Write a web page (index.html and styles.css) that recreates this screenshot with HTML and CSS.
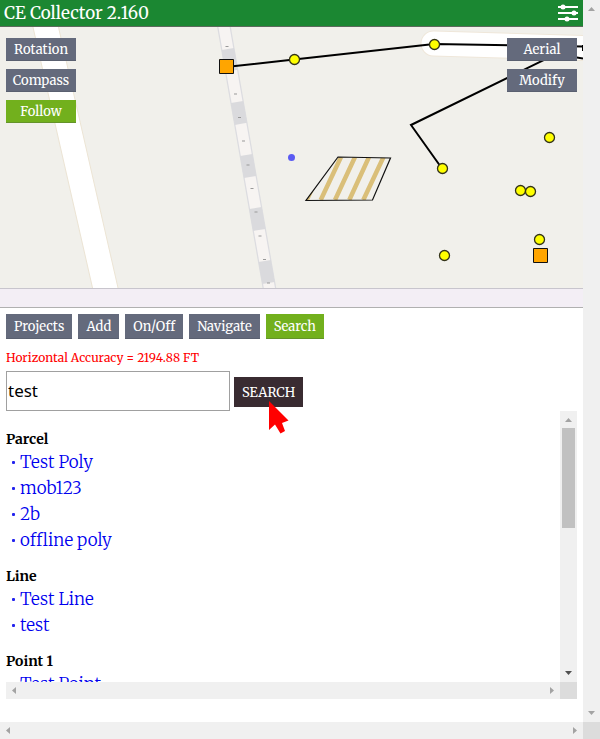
FILE: index.html
```html
<!DOCTYPE html>
<html lang="en">
<head>
<meta charset="utf-8">
<meta name="viewport" content="width=device-width, initial-scale=1">
<title>CE Collector 2.160</title>
<link rel="stylesheet" href="styles.css">
</head>
<body>
<div class="viewport">
  <div class="app">
    <header class="topbar">
      <h1>CE Collector 2.160</h1>
      <button class="menu" type="button" aria-label="Settings">
        <svg width="20" height="18" viewBox="0 0 20 18" fill="#fff">
          <path d="M0 2h20v2H0zM0 8h20v2H0zM0 14h20v2H0z"/>
          <circle cx="5" cy="3" r="2.5"/><circle cx="16" cy="9" r="2.5"/><circle cx="9" cy="15" r="2.5"/>
        </svg>
      </button>
    </header>

    <section class="map" aria-label="Map">
      <svg class="map-canvas" viewBox="0 27 583 261">
        <defs>
          <clipPath id="parcel"><path d="M338 157 390.500 158 372.500 200 306 200.500z"/></clipPath>
        </defs>
        <rect y="27" width="583" height="261" fill="#f1f0eb"/>
        <path d="M32.500 25 93 290h25.500L58 25z" fill="#fff" stroke="#ece4d4"/>
        <g fill="none" stroke-linecap="round">
          <path d="M433.500 43.500 600 48.500" stroke="#efe7da" stroke-width="26"/>
          <path d="M433.500 43.500 600 48.500" stroke="#fff" stroke-width="24"/>
        </g>
        <g fill="none">
          <path d="M223.650 25 269.750 290" stroke="#dcdce0" stroke-width="13.500"/>
          <path d="M223.650 25 269.750 290" stroke="#f7f4f2" stroke-width="11"/>
          <path d="M224 27 269.400 288" stroke="#dadadd" stroke-width="12.500" stroke-dasharray="22.300 31.500" stroke-dashoffset="-22.300"/>
          <path d="M225.500 46.500h3M234 94h3M238 117.500h3M242 141h3M246.500 165h3M250.500 188.500h3M254.500 212h3M258.500 236h3M263 259.500h3M267 283h3" stroke="#999"/>
        </g>
        <g clip-path="url(#parcel)">
          <path d="M306.700 200 327 157M320.700 200 341 157M335 200 355 157M349.300 200 369 157M363.300 200 383.500 157" stroke="#dabf79" stroke-width="4.500"/>
        </g>
        <path d="M338 157 390.500 158 372.500 200 306 200.500z" fill="none" stroke="#111" stroke-width="1.200"/>
        <path d="M226 67 294 59.500 434 44 583 46.500M442 168.500 411 125 556 54 583 58.500" fill="none" stroke="#000" stroke-width="2"/>
        <path d="M582.500 45v6" stroke="#000"/>
        <g fill="#ff0" stroke="#333319" stroke-width="1.300">
          <circle cx="294.500" cy="59.500" r="5"/><circle cx="434.500" cy="44.500" r="5"/>
          <circle cx="549.500" cy="137.500" r="5"/><circle cx="442.500" cy="168.500" r="5"/>
          <circle cx="520.500" cy="190.500" r="5"/><circle cx="530.500" cy="191.500" r="5"/>
          <circle cx="539.500" cy="239.500" r="5"/><circle cx="444.500" cy="255.500" r="5"/>
        </g>
        <path d="M219.500 59.500h14v14h-14zM533.500 248.500h14v14h-14z" fill="#ffa500" stroke="#111"/>
        <circle cx="291.500" cy="157.500" r="3.500" fill="#5b5bf2"/>
      </svg>
      <div class="map-tools">
        <button class="btn" type="button">Rotation</button>
        <button class="btn" type="button">Compass</button>
        <button class="btn on" type="button">Follow</button>
      </div>
      <div class="map-tools right">
        <button class="btn" type="button">Aerial</button>
        <button class="btn" type="button">Modify</button>
      </div>
    </section>

    <div class="divider"></div>

    <main class="panel">
      <nav class="tabs">
        <button class="btn" type="button">Projects</button>
        <button class="btn" type="button">Add</button>
        <button class="btn" type="button">On/Off</button>
        <button class="btn" type="button">Navigate</button>
        <button class="btn on" type="button">Search</button>
      </nav>
      <p class="accuracy">Horizontal Accuracy = 2194.88 FT</p>
      <form class="search">
        <input type="text" value="test" aria-label="Search text">
        <div class="submit">
          <button type="button">SEARCH</button>
          <svg class="pointer" width="20" height="33" viewBox="0 0 20 33"><path d="M0 0 19.500 19.500 13 22 16 30 11.500 32.500 6 23.500 0 29z" fill="#f00"/></svg>
        </div>
      </form>
      <div class="scroller">
        <div class="results">
          <section>
            <h2>Parcel</h2>
            <ul><li><a href="#">Test Poly</a></li><li><a href="#">mob123</a></li><li><a href="#">2b</a></li><li><a href="#">offline poly</a></li></ul>
          </section>
          <section>
            <h2>Line</h2>
            <ul><li><a href="#">Test Line</a></li><li><a href="#">test</a></li></ul>
          </section>
          <section>
            <h2>Point 1</h2>
            <ul><li><a href="#">Test Point</a></li></ul>
          </section>
        </div>
        <div class="bar vertical">
          <svg width="17" height="17" viewBox="0 0 17 17"><path d="M5 11h7L8.500 7z" fill="#a3a3a3"/></svg>
          <div class="thumb"></div>
          <svg class="end" width="17" height="17" viewBox="0 0 17 17"><path d="M5 6h7l-3.500 4z" fill="#505050"/></svg>
        </div>
        <div class="bar">
          <svg width="17" height="17" viewBox="0 0 17 17"><path d="M10 5v7L6 8.500z" fill="#a3a3a3"/></svg>
          <svg class="end" width="17" height="17" viewBox="0 0 17 17"><path d="M7 5v7l4-3.500z" fill="#a3a3a3"/></svg>
        </div>
        <div class="corner"></div>
      </div>
    </main>
  </div>
  <div class="bar vertical">
    <svg width="17" height="17" viewBox="0 0 17 17"><path d="M5 11h7L8.500 7z" fill="#a3a3a3"/></svg>
    <svg class="end" width="17" height="17" viewBox="0 0 17 17"><path d="M5 6h7l-3.500 4z" fill="#a3a3a3"/></svg>
  </div>
  <div class="bar">
    <svg width="17" height="17" viewBox="0 0 17 17"><path d="M10 5v7L6 8.500z" fill="#a3a3a3"/></svg>
    <svg class="end" width="17" height="17" viewBox="0 0 17 17"><path d="M7 5v7l4-3.500z" fill="#a3a3a3"/></svg>
  </div>
  <div class="corner"></div>
</div>
</body>
</html>
```
FILE: styles.css
```css
* { box-sizing: border-box; }

body {
  margin: 0;
  background: #fff;
  color: #000;
  font: 13px/20px Merriweather, "Liberation Serif", serif;
}

svg { display: block; }
h1, h2, p, ul { margin: 0; padding: 0; }
button { border: 0; padding: 0; font: inherit; color: #fff; }

.viewport, .scroller {
  display: grid;
  grid-template-columns: minmax(0, 1fr) 17px;
  grid-template-rows: minmax(0, 1fr) 17px;
}
.viewport { height: 100vh; }

.app { display: flex; flex-direction: column; min-height: 0; overflow: hidden; }

.topbar {
  display: flex;
  align-items: center;
  justify-content: space-between;
  padding: 0 5px 0 4px;
  background: #1b8732;
  border-bottom: 1px solid #5c6a5c;
}
.topbar h1 { color: #fff; font-size: 17px; font-weight: 400; line-height: 26px; }
.menu { background: none; }

.map { position: relative; border-bottom: 1px solid #c8c5cd; }
.map-canvas { width: 100%; height: auto; }
.map-tools {
  position: absolute;
  top: 11px;
  left: 6px;
  display: grid;
  gap: 8px;
  width: 70px;
}
.map-tools.right { left: auto; right: 6px; }

.btn {
  padding: 2px 8px 0;
  background: #646a7c;
  border-bottom: 1px solid #5a6070;
  line-height: 22px;
}
.btn.on { background: #72b01d; border-color: #64932a; }
.map-tools .btn { padding: 2px 0 0; line-height: 20px; }

.divider { height: 19px; flex: none; background: #f3eef5; border-bottom: 1px solid #b0b0b0; }

.panel {
  display: flex;
  flex-direction: column;
  flex: 1;
  min-height: 0;
  padding: 6px 6px 23px;
}
.tabs { display: flex; gap: 6px; }
.accuracy { padding: 9px 0 3px; color: #f00; font-size: 12px; }

.search { display: flex; align-items: center; gap: 4px; }
.search input {
  width: 224px;
  height: 40px;
  padding: 0 1px 2px;
  border: 1px solid #a0a0a0;
  border-radius: 0;
  font: 17px "Noto Sans", sans-serif;
}
.submit { position: relative; padding-top: 2px; }
.submit button {
  padding: 2px 8px 0;
  background: #392b31;
  line-height: 28px;
}
.pointer { position: absolute; top: 26px; left: 35px; }

.scroller { flex: 1; min-height: 0; }
.results { overflow: hidden; padding-top: 5px; }
.results section { padding-top: 13px; }
.results h2 { font-size: 14px; line-height: 20px; }
.results ul { list-style: none; }
.results li { display: flex; align-items: center; font-size: 17px; font-weight: 300; line-height: 26px; }
.results li::before { content: ""; width: 3px; height: 3px; margin: 0 5px 0 6px; background: #22e; border-radius: 1px; }
.results a { color: #00e; text-decoration: none; }

.bar { display: flex; min-width: 0; min-height: 0; background: #f0f0f0; }
.bar.vertical { flex-direction: column; }
.end { margin-left: auto; }
.vertical .end { margin: auto 0 0; }
.thumb { height: 100px; margin: 0 2px; background: #c1c1c1; }
.corner { background: #dcdcdc; }
```
